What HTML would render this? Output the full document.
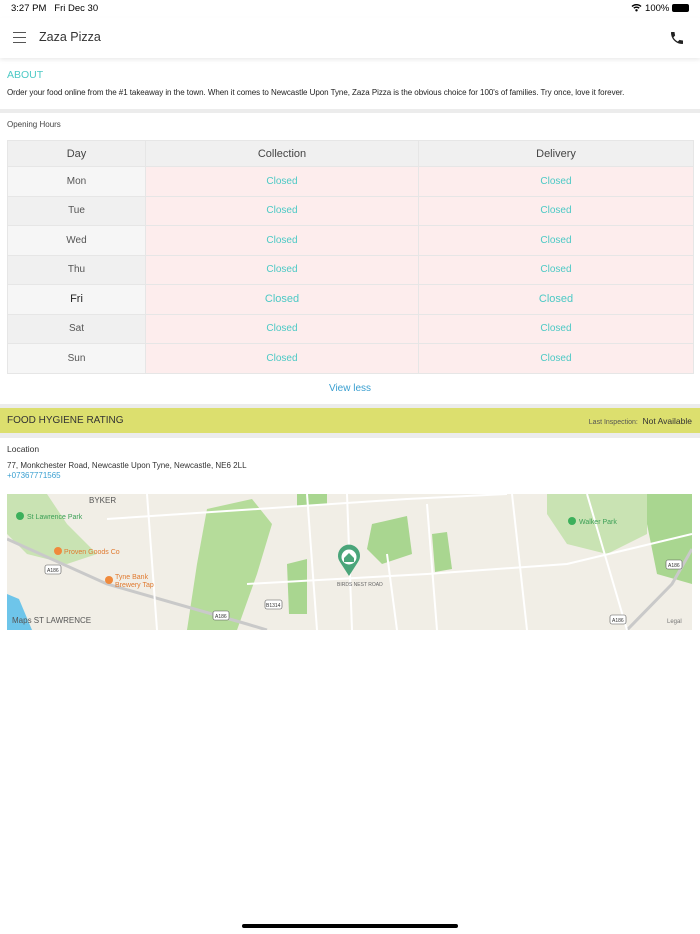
<!DOCTYPE html>
<html><head><meta charset="utf-8"><style>
*{margin:0;padding:0;box-sizing:border-box}
body{width:700px;height:934px;background:#fff;font-family:"Liberation Sans",sans-serif;position:relative;overflow:hidden;color:#333}
.a{position:absolute;white-space:nowrap}
table{position:absolute;left:7px;top:140px;width:686px;border-collapse:collapse;font-size:10px;table-layout:fixed}
td,th{border:1px solid #e6e6e6;text-align:center;height:29.5px}
th{background:#f0f0f0;font-weight:normal;font-size:11px;color:#444;height:26px}
td.d{color:#555}
td.c{background:#fdeded;color:#4cc9c5}
tr.o td.d{background:#f6f6f6}tr.e td.d{background:#f0f0f0}
</style></head><body>
<div class="a" style="left:11px;top:3px;font-size:9.5px;color:#000">3:27 PM&nbsp;&nbsp; Fri Dec 30</div>
<div class="a" style="right:11px;top:3px;font-size:9.5px;color:#000">
<svg width="11" height="9" viewBox="0 0 11 9" style="vertical-align:-1px"><path d="M1 3.5a6.5 6.5 0 0 1 9 0M2.8 5.2a4 4 0 0 1 5.4 0" stroke="#000" stroke-width="1.4" fill="none"/><circle cx="5.5" cy="7.3" r="1.2"/></svg> 100% <span style="display:inline-block;width:17px;height:8px;background:#000;border-radius:2px;vertical-align:-1px"></span></div>
<div class="a" style="left:0;top:18px;width:700px;height:40px;box-shadow:0 2px 4px rgba(0,0,0,.08)"></div>
<div class="a" style="left:13px;top:32px;width:13px;height:1px;background:#555;box-shadow:0 5px 0 #555,0 10px 0 #555"></div>
<div class="a" style="left:39px;top:30px;font-size:12.5px;color:#333">Zaza Pizza</div>
<svg class="a" style="left:669px;top:30px" width="16" height="16" viewBox="0 0 24 24"><path d="M6.6 10.8c1.4 2.8 3.8 5.1 6.6 6.6l2.2-2.2c.3-.3.7-.4 1-.2 1.1.4 2.3.6 3.6.6.6 0 1 .4 1 1V20c0 .6-.4 1-1 1C10.6 21 3 13.4 3 4c0-.6.4-1 1-1h3.5c.6 0 1 .4 1 1 0 1.3.2 2.5.6 3.6.1.3 0 .7-.2 1z" fill="#222"/></svg>
<div class="a" style="left:7px;top:69px;font-size:10.5px;color:#4cc9c5">ABOUT</div>
<div class="a" style="left:7px;top:88px;font-size:8px;color:#222;letter-spacing:-0.05px">Order your food online from the #1 takeaway in the town. When it comes to Newcastle Upon Tyne, Zaza Pizza is the obvious choice for 100's of families. Try once, love it forever.</div>
<div class="a" style="left:0;top:109px;width:700px;height:4px;background:#ececec"></div>
<div class="a" style="left:7px;top:120px;font-size:8px;color:#444">Opening Hours</div>
<table>
<colgroup><col style="width:138px"><col style="width:273px"><col style="width:275px"></colgroup>
<tr><th>Day</th><th>Collection</th><th>Delivery</th></tr>
<tr class="o"><td class="d">Mon</td><td class="c">Closed</td><td class="c">Closed</td></tr>
<tr class="e"><td class="d">Tue</td><td class="c">Closed</td><td class="c">Closed</td></tr>
<tr class="o"><td class="d">Wed</td><td class="c">Closed</td><td class="c">Closed</td></tr>
<tr class="e"><td class="d">Thu</td><td class="c">Closed</td><td class="c">Closed</td></tr>
<tr class="o" style="font-size:11px"><td class="d" style="color:#222">Fri</td><td class="c">Closed</td><td class="c">Closed</td></tr>
<tr class="e"><td class="d">Sat</td><td class="c">Closed</td><td class="c">Closed</td></tr>
<tr class="o"><td class="d">Sun</td><td class="c">Closed</td><td class="c">Closed</td></tr>
</table>
<div class="a" style="left:0;width:700px;top:383px;text-align:center;font-size:10px;color:#3a9fd0">View less</div>
<div class="a" style="left:0;top:404px;width:700px;height:34px;background:#ececec"></div>
<div class="a" style="left:0;top:408px;width:700px;height:25px;background:#dcdf6e"></div>
<div class="a" style="left:7px;top:415px;font-size:10px;color:#333">FOOD HYGIENE RATING</div>
<div class="a" style="right:8px;top:416px;font-size:8.5px;color:#333"><span style="font-size:7px;color:#555">Last Inspection:</span>&nbsp; Not Available</div>
<div class="a" style="left:7px;top:444px;font-size:8.5px;color:#333">Location</div>
<div class="a" style="left:7px;top:461px;font-size:8px;color:#333">77, Monkchester Road, Newcastle Upon Tyne, Newcastle, NE6 2LL</div>
<div class="a" style="left:7px;top:471px;font-size:8px;color:#3a9fd0">+07367771565</div>
<svg class="a" style="left:7px;top:494px" width="685" height="136" viewBox="0 0 685 136">
<rect width="685" height="136" fill="#f1eee6"/>
<path d="M200 15 L245 5 L265 30 L250 80 L230 136 L180 136 L190 70Z" fill="#b5dc9a"/>
<path d="M0 0 L40 0 L60 30 L90 60 L60 70 L20 60 L0 40Z" fill="#c9e3b3"/>
<path d="M365 30 L400 22 L405 60 L375 70 L360 55Z" fill="#a9d690"/>
<path d="M425 40 L440 38 L445 75 L428 78Z" fill="#a9d690"/>
<path d="M540 0 L640 0 L640 40 L600 60 L560 50 L540 20Z" fill="#c9e3b3"/>
<path d="M640 0 L685 0 L685 90 L650 80 L640 30Z" fill="#a9d690"/>
<path d="M280 70 L300 65 L300 120 L282 120Z" fill="#a9d690"/>
<path d="M290 0 L320 0 L320 10 L290 12Z" fill="#a9d690"/>
<path d="M0 100 L12 105 L25 136 L0 136Z" fill="#6ec5ea"/>
<path d="M0 45 L100 90 L240 130 L260 136" stroke="#c9c9c9" stroke-width="3" fill="none"/>
<path d="M620 136 L665 90 L685 55" stroke="#c9c9c9" stroke-width="3" fill="none"/>
<g stroke="#fff" stroke-width="2" fill="none">
<path d="M100 25 L400 5 L500 0"/><path d="M240 90 L420 80 L560 70 L685 40"/><path d="M140 0 L150 136"/><path d="M300 0 L310 136"/>
<path d="M420 10 L430 136"/><path d="M505 0 L520 136"/><path d="M580 0 L620 136"/><path d="M340 0 L345 136"/><path d="M380 60 L390 136"/></g>
<text x="82" y="9" font-size="8" fill="#555" font-family="Liberation Sans">BYKER</text>
<circle cx="13" cy="22" r="4" fill="#3cb05b"/><text x="20" y="25" font-size="7" fill="#3a9f55" font-family="Liberation Sans">St Lawrence Park</text>
<circle cx="51" cy="57" r="4" fill="#f08a3c"/><text x="57" y="60" font-size="7" fill="#e07a30" font-family="Liberation Sans">Proven Goods Co</text>
<circle cx="102" cy="86" r="4" fill="#f08a3c"/><text x="108" y="85" font-size="7" fill="#e07a30" font-family="Liberation Sans">Tyne Bank</text><text x="108" y="93" font-size="7" fill="#e07a30" font-family="Liberation Sans">Brewery Tap</text>
<circle cx="565" cy="27" r="4" fill="#3cb05b"/><text x="572" y="30" font-size="7" fill="#3a9f55" font-family="Liberation Sans">Walker Park</text>
<text x="330" y="92" font-size="5" fill="#666" font-family="Liberation Sans">BIRDS NEST ROAD</text>
<text x="5" y="129" font-size="8" fill="#555" font-family="Liberation Sans"> Maps  ST LAWRENCE</text>
<text x="660" y="129" font-size="6" fill="#777" font-family="Liberation Sans">Legal</text>
<g font-size="5" font-family="Liberation Sans" fill="#333"><rect x="38" y="71" width="16" height="9" rx="2" fill="#fff" stroke="#555" stroke-width=".6"/><text x="40" y="78">A186</text>
<rect x="206" y="117" width="16" height="9" rx="2" fill="#fff" stroke="#555" stroke-width=".6"/><text x="208" y="124">A186</text>
<rect x="258" y="106" width="17" height="9" rx="2" fill="#fff" stroke="#555" stroke-width=".6"/><text x="259" y="113">B1314</text>
<rect x="659" y="66" width="16" height="9" rx="2" fill="#fff" stroke="#555" stroke-width=".6"/><text x="661" y="73">A186</text>
<rect x="603" y="121" width="16" height="9" rx="2" fill="#fff" stroke="#555" stroke-width=".6"/><text x="605" y="128">A186</text></g>
<path d="M342 82 L333 68 A11 11 0 1 1 351 68Z" fill="#4aa57a"/><circle cx="342" cy="63" r="7.5" fill="#fff"/><path d="M337 64 L342 59 L347 64 L347 68 L337 68Z" fill="#4aa57a"/>
</svg>
<div class="a" style="left:242px;top:924px;width:216px;height:4px;border-radius:2px;background:#000"></div>
</body></html>
